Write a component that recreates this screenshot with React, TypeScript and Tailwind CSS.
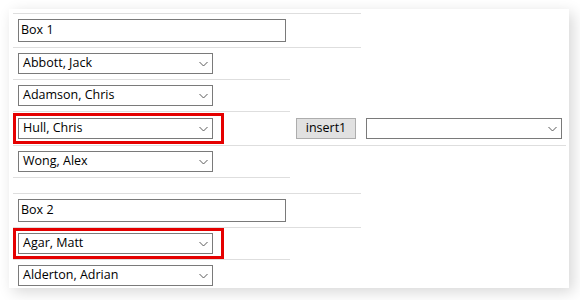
import React from "react";

const font = { fontFamily: '"Open Sans", "Noto Sans", sans-serif' };

function Chevron() {
  return (
    <svg width="9" height="6" viewBox="0 0 9 6" className="shrink-0">
      <path d="M0.5 1 L4.5 5 L8.5 1" fill="none" stroke="#5a5a5a" strokeWidth="1" />
    </svg>
  );
}

function Select({ value, w = "w-[195px]" }: { value: string; w?: string }) {
  return (
    <div
      className={`${w} h-[21px] border border-[#7a7a7a] bg-white flex items-center justify-between pl-[4px] pr-[4px] text-[12.5px] text-black leading-none`}
    >
      <span>{value}</span>
      <Chevron />
    </div>
  );
}

function TextBox({ value }: { value: string }) {
  return (
    <div className="w-[268px] h-[23px] border border-[#7a7a7a] bg-white flex items-center pl-[2px] text-[12.5px] text-black leading-none">
      {value}
    </div>
  );
}

function Marked({ children }: { children: React.ReactNode }) {
  return (
    <div className="w-[211px] h-[31px] border-[3px] border-[#e50000] flex items-center pl-[2px]">
      {children}
    </div>
  );
}

export default function App() {
  return (
    <div className="w-[580px] h-[300px] bg-white pt-[9px] pl-[9px]" style={font}>
      <div className="w-[560px] h-[279px] bg-white overflow-hidden pt-[4px] pl-[4px] shadow-[4px_4px_14px_rgba(0,0,0,0.16)]">
        <div className="flex flex-col w-[553px]">
          <div className="w-[348px] h-[35px] border-y border-[#dedede] flex items-center pl-[5px]">
            <TextBox value="Box 1" />
          </div>
          <div className="w-[277px] h-[32px] border-b border-[#dedede] flex items-center pl-[5px]">
            <Select value="Abbott, Jack" />
          </div>
          <div className="w-[277px] h-[32px] border-b border-[#dedede] flex items-center pl-[5px]">
            <Select value="Adamson, Chris" />
          </div>
          <div className="w-[553px] h-[34px] border-b border-[#dedede] flex items-center">
            <div className="w-[277px] flex items-center">
              <Marked>
                <Select value="Hull, Chris" />
              </Marked>
            </div>
            <div className="w-[71px] flex items-center pl-[6px]">
              <button className="w-[60px] h-[21px] bg-[#e1e1e1] border border-[#adadad] text-[12.5px] text-black leading-none flex items-center justify-center">
                insert1
              </button>
            </div>
            <div className="w-[205px] flex items-center pl-[5px]">
              <Select value="" w="w-[196px]" />
            </div>
          </div>
          <div className="w-[277px] h-[32px] border-b border-[#dedede] flex items-center pl-[5px]">
            <Select value="Wong, Alex" />
          </div>
          <div className="h-[15px]" />
          <div className="w-[348px] h-[35px] border-y border-[#dedede] flex items-center pl-[5px]">
            <TextBox value="Box 2" />
          </div>
          <div className="w-[277px] h-[32px] border-b border-[#dedede] flex items-center">
            <Marked>
              <Select value="Agar, Matt" />
            </Marked>
          </div>
          <div className="w-[277px] h-[32px] border-b border-[#dedede] flex items-center pl-[5px]">
            <Select value="Alderton, Adrian" />
          </div>
        </div>
      </div>
    </div>
  );
}
